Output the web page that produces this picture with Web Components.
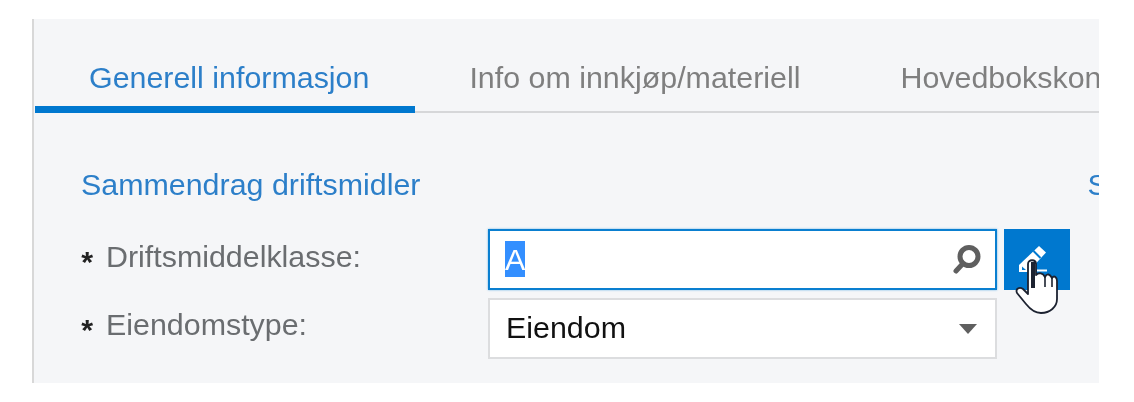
<!DOCTYPE html>
<html>
<head>
<meta charset="utf-8">
<style>
    html, body { margin: 0; background: #fff; }
    body { padding: 19px 0 0 32px; font-family: "Liberation Sans", Arial, sans-serif; }
</style>
</head>
<body>
<asset-panel>
    <tab-bar slot="tabs">
        <tab-item active>Generell informasjon</tab-item>
        <tab-item>Info om innkjøp/materiell</tab-item>
        <tab-item>Hovedbokskonti</tab-item>
    </tab-bar>
    <form-section>
        <span slot="title">Sammendrag driftsmidler</span>
        <span slot="next">S</span>
        <form-row label="Driftsmiddelklasse:" style="--label-top: 10px">
            <lookup-field value="A"></lookup-field>
            <edit-button></edit-button>
        </form-row>
        <form-row label="Eiendomstype:" style="--label-top: 9px">
            <select-field value="Eiendom"></select-field>
        </form-row>
    </form-section>
</asset-panel>

<script>
class AssetPanel extends HTMLElement {
    connectedCallback() {
        this.attachShadow({mode: 'open'});
        this.shadowRoot.innerHTML =
            `<style>
                :host {
                    display: block;
                    box-sizing: border-box;
                    width: 1067px;
                    height: 364px;
                    background: #f5f6f8;
                    border-left: 2px solid #d8d8d8;
                    padding-left: 1px;
                    overflow: hidden;
                    filter: blur(0.4px);
                }
            </style>
            <slot name="tabs"></slot>
            <slot></slot>`;
    }
}

class TabBar extends HTMLElement {
    connectedCallback() {
        this.attachShadow({mode: 'open'});
        this.shadowRoot.innerHTML =
            `<style>
                :host {
                    display: flex;
                    box-sizing: border-box;
                    height: 94px;
                    padding-top: 37px;
                    border-bottom: 2px solid #d6d7d9;
                    white-space: nowrap;
                }
            </style>
            <slot></slot>`;
    }
}

class TabItem extends HTMLElement {
    connectedCallback() {
        this.attachShadow({mode: 'open'});
        this.shadowRoot.innerHTML =
            `<style>
                :host {
                    display: block;
                    box-sizing: border-box;
                    height: 57px;
                    padding: 4px 46px 0 54px;
                    font-size: 30.4px;
                    line-height: 34px;
                    color: #7f7f7f;
                }
                :host([active]) {
                    color: #2c7fc9;
                    border-bottom: 7px solid #0078cf;
                }
            </style>
            <slot></slot>`;
    }
}

class FormSection extends HTMLElement {
    connectedCallback() {
        this.attachShadow({mode: 'open'});
        this.shadowRoot.innerHTML =
            `<style>
                :host { display: block; padding: 54px 0 0 45px; }
                .titles {
                    display: flex;
                    gap: 667px;
                    padding-left: 1px;
                    white-space: nowrap;
                    font-size: 30.4px;
                    line-height: 34px;
                    color: #2c7fc9;
                    margin-bottom: 28px;
                }
            </style>
            <div class="titles">
                <slot name="title"></slot>
                <slot name="next"></slot>
            </div>
            <slot></slot>`;
    }
}

class FormRow extends HTMLElement {
    connectedCallback() {
        this.attachShadow({mode: 'open'});
        this.shadowRoot.innerHTML =
            `<style>
                :host {
                    display: grid;
                    grid-template-columns: 408px auto;
                    margin-bottom: 8px;
                }
                .label {
                    display: flex;
                    gap: 13px;
                    font-size: 30.4px;
                    line-height: 34px;
                    padding-top: var(--label-top, 10px);
                    color: #6a6d70;
                }
                .star {
                    width: 13px;
                    padding-top: 5px;
                    color: #222;
                    font-weight: bold;
                    text-align: right;
                }
                .controls { display: flex; gap: 7px; align-items: flex-start; }
            </style>
            <div class="label"><span class="star">*</span><span>${this.getAttribute('label')}</span></div>
            <div class="controls"><slot></slot></div>`;
    }
}

class LookupField extends HTMLElement {
    connectedCallback() {
        this.attachShadow({mode: 'open'});
        this.shadowRoot.innerHTML =
            `<style>
                :host {
                    display: flex;
                    align-items: center;
                    justify-content: space-between;
                    box-sizing: border-box;
                    width: 509px;
                    height: 61px;
                    padding: 0 12px 0 15px;
                    background: #fff;
                    border: 2px solid #0a7fd0;
                    box-shadow: 0 0 2px #6db4e6;
                    font-size: 30.4px;
                }
                .sel {
                    background: #338fff;
                    color: #fff;
                    line-height: 36px;
                    height: 36px;
                    margin-bottom: 1px;
                }
                svg { display: block; }
            </style>
            <span class="sel">${this.getAttribute('value')}</span>
            <svg width="30" height="30" viewBox="0 0 30 30">
                <circle cx="16" cy="11.5" r="9" fill="none" stroke="#5f5f5f" stroke-width="5"/>
                <path d="M9.5 19 L3 26" stroke="#5f5f5f" stroke-width="5" stroke-linecap="round"/>
            </svg>`;
    }
}

class SelectField extends HTMLElement {
    connectedCallback() {
        this.attachShadow({mode: 'open'});
        this.shadowRoot.innerHTML =
            `<style>
                :host {
                    display: flex;
                    align-items: center;
                    justify-content: space-between;
                    box-sizing: border-box;
                    width: 509px;
                    height: 61px;
                    padding: 0 18px 2px 16px;
                    background: #fff;
                    border: 2px solid #dcdddf;
                    font-size: 30.4px;
                    color: #111;
                }
                .caret {
                    width: 0;
                    height: 0;
                    margin-top: 2px;
                    border-left: 9.5px solid transparent;
                    border-right: 9.5px solid transparent;
                    border-top: 10px solid #5f5f5f;
                }
            </style>
            <span>${this.getAttribute('value')}</span>
            <span class="caret"></span>`;
    }
}

class EditButton extends HTMLElement {
    connectedCallback() {
        this.attachShadow({mode: 'open'});
        this.shadowRoot.innerHTML =
            `<style>
                :host {
                    display: flex;
                    align-items: center;
                    justify-content: center;
                    position: relative;
                    width: 66px;
                    height: 61px;
                    background: #0078cf;
                }
                svg { display: block; }
                .pencil { margin-right: 9px; }
                .hand { position: absolute; left: 11px; top: 30px; }
            </style>
            <svg class="pencil" width="30" height="30" viewBox="0 0 30 30">
                <path d="M21 1 L28 7.5 L10 27 L1 27 L1 20 Z" fill="#fff"/>
                <path d="M15.5 6 L22.5 13" stroke="#0078cf" stroke-width="2"/>
                <path d="M4 21.5 L8 25 L4 25 Z" fill="#0078cf"/>
                <path d="M19 25.5 L29 25.5" stroke="#fff" stroke-width="2"/>
            </svg>
            <svg class="hand" width="46" height="56" viewBox="0 0 46 56">
                <path d="M13 5 C13 0 21 0 21 5 L21 16 C24 13 28 14 30 18 C32 14 35 15 37 19 C39 16 42 18 42 22 L42 40 C42 48 35 54 26 54 C19 54 15 50 11 45 L2 34 C0 29 5 28 8 30 L13 35 Z"
                      fill="#fff" stroke="#1c2230" stroke-width="1.8" stroke-linejoin="round"/>
                <path d="M18 3 L18 29" stroke="#1c2230" stroke-width="4"/>
                <path d="M30 18 L30 28 M37 19 L37 28" stroke="#1c2230" stroke-width="1.6"/>
            </svg>`;
    }
}

customElements.define('asset-panel', AssetPanel);
customElements.define('tab-bar', TabBar);
customElements.define('tab-item', TabItem);
customElements.define('form-section', FormSection);
customElements.define('form-row', FormRow);
customElements.define('lookup-field', LookupField);
customElements.define('select-field', SelectField);
customElements.define('edit-button', EditButton);
</script>
</body>
</html>
